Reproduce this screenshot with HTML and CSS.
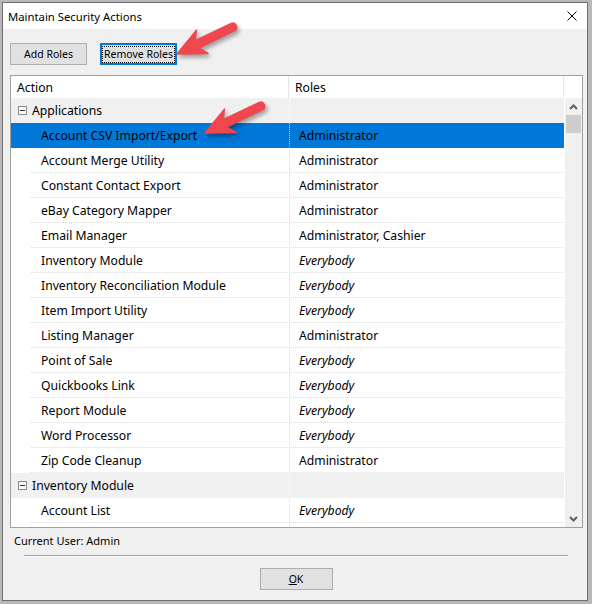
FILE: index.html
```html
<!DOCTYPE html>
<html lang="en">

<head>
    <meta charset="UTF-8">
    <title>Maintain Security Actions</title>
    <link rel="stylesheet" href="styles.css">
</head>

<body>
    <div class="window">
        <div class="titlebar">
            <span class="title">Maintain Security Actions</span>
            <svg class="close-icon" width="10" height="10" viewBox="0 0 10 10">
                <path d="M0.5 0.5 L9.5 9.5 M9.5 0.5 L0.5 9.5" stroke="#000" stroke-width="1" />
            </svg>
        </div>

        <div class="dialog">
            <div class="toolbar">
                <button type="button" class="btn">Add Roles</button>
                <button type="button" class="btn btn-focused"><span class="focus-rect">Remove Roles</span></button>
            </div>

            <div class="listview">
                <div class="lv-header">
                    <div class="hd-action">Action</div>
                    <div class="hd-roles">Roles</div>
                    <div class="hd-rest"></div>
                </div>
                <div class="lv-body">
                    <div class="lv-rows">
                        <div class="row group">
                            <div class="cell-action"><span class="toggle"></span>Applications</div>
                            <div class="cell-roles"></div>
                        </div>
                        <div class="row selected">
                            <div class="cell-action">Account CSV Import/Export</div>
                            <div class="cell-roles">Administrator</div>
                        </div>
                        <div class="row">
                            <div class="cell-action">Account Merge Utility</div>
                            <div class="cell-roles">Administrator</div>
                        </div>
                        <div class="row">
                            <div class="cell-action">Constant Contact Export</div>
                            <div class="cell-roles">Administrator</div>
                        </div>
                        <div class="row">
                            <div class="cell-action">eBay Category Mapper</div>
                            <div class="cell-roles">Administrator</div>
                        </div>
                        <div class="row">
                            <div class="cell-action">Email Manager</div>
                            <div class="cell-roles">Administrator, Cashier</div>
                        </div>
                        <div class="row">
                            <div class="cell-action">Inventory Module</div>
                            <div class="cell-roles everybody">Everybody</div>
                        </div>
                        <div class="row">
                            <div class="cell-action">Inventory Reconciliation Module</div>
                            <div class="cell-roles everybody">Everybody</div>
                        </div>
                        <div class="row">
                            <div class="cell-action">Item Import Utility</div>
                            <div class="cell-roles everybody">Everybody</div>
                        </div>
                        <div class="row">
                            <div class="cell-action">Listing Manager</div>
                            <div class="cell-roles">Administrator</div>
                        </div>
                        <div class="row">
                            <div class="cell-action">Point of Sale</div>
                            <div class="cell-roles everybody">Everybody</div>
                        </div>
                        <div class="row">
                            <div class="cell-action">Quickbooks Link</div>
                            <div class="cell-roles everybody">Everybody</div>
                        </div>
                        <div class="row">
                            <div class="cell-action">Report Module</div>
                            <div class="cell-roles everybody">Everybody</div>
                        </div>
                        <div class="row">
                            <div class="cell-action">Word Processor</div>
                            <div class="cell-roles everybody">Everybody</div>
                        </div>
                        <div class="row">
                            <div class="cell-action">Zip Code Cleanup</div>
                            <div class="cell-roles">Administrator</div>
                        </div>
                        <div class="row group">
                            <div class="cell-action"><span class="toggle"></span>Inventory Module</div>
                            <div class="cell-roles"></div>
                        </div>
                        <div class="row">
                            <div class="cell-action">Account List</div>
                            <div class="cell-roles everybody">Everybody</div>
                        </div>
                        <div class="row">
                            <div class="cell-action"></div>
                            <div class="cell-roles"></div>
                        </div>
                    </div>
                    <div class="scrollbar">
                        <div class="sb-button">
                            <svg width="9" height="6" viewBox="0 0 9 6"><path d="M1 5 L4.5 1.5 L8 5" fill="none" stroke="#606060" stroke-width="2" /></svg>
                        </div>
                        <div class="sb-thumb"></div>
                        <div class="sb-track"></div>
                        <div class="sb-button">
                            <svg width="9" height="6" viewBox="0 0 9 6"><path d="M1 1 L4.5 4.5 L8 1" fill="none" stroke="#606060" stroke-width="2" /></svg>
                        </div>
                    </div>
                </div>
            </div>

            <div class="status">Current User: Admin</div>
            <div class="separator"></div>

            <div class="footer">
                <button type="button" class="btn btn-ok"><u>O</u>K</button>
            </div>
        </div>
    </div>

    <!-- red callout arrows drawn over the dialog -->
    <svg class="callouts" width="592" height="604" viewBox="0 0 592 604">
        <path transform="translate(177 54)" d="M0 0 L19.5 -23.9 L18.1 -13.2 L54.3 -30.6 A4 4 0 0 1 57.7 -23.4 L21.5 -6 L30.9 -0.5 Z" />
        <path transform="translate(205 133)" d="M0 0 L19.5 -23.9 L18.1 -13.2 L54.3 -30.6 A4 4 0 0 1 57.7 -23.4 L21.5 -6 L30.9 -0.5 Z" />
    </svg>
</body>

</html>
```

FILE: styles.css
```css
:root {
    --face-color: #f0f0f0;
    --button-color: #e1e1e1;
    --button-border: #adadad;
    --select-color: #0078d7;
    --grid-line: #dcdcdc;
    --text-color: #000000;
    --arrow-color: #f0464e;
}

body {
    font-family: "Noto Sans", "Open Sans", sans-serif;
    font-size: 11.3px;
    margin: 0;
    width: 592px;
    height: 604px;
    background-color: #b8b8b8;
    color: var(--text-color);
    position: relative;
    overflow: hidden;
}

.window {
    margin: 2px 0 0 2px;
    width: 584px;
    height: 597px;
    border: 1px solid #6f6f6f;
    display: flex;
    flex-direction: column;
}

.titlebar {
    height: 26px;
    background: #ffffff;
    display: flex;
    align-items: center;
    justify-content: space-between;
    padding: 0 10px 0 5px;
}

.title {
    font-size: 11.3px;
}

.close-icon {
    display: block;
}

.dialog {
    flex-grow: 1;
    background: var(--face-color);
    display: flex;
    flex-direction: column;
}

.toolbar {
    display: flex;
    gap: 13px;
    padding: 14px 0 0 7px;
}

.btn {
    width: 77px;
    height: 22px;
    padding: 0;
    font-family: inherit;
    font-size: 10.5px;
    white-space: nowrap;
    color: var(--text-color);
    background: var(--button-color);
    border: 1px solid var(--button-border);
}

.btn-focused {
    border: 2px solid var(--select-color);
    display: flex;
    align-items: center;
    justify-content: center;
}

.focus-rect {
    border: 1px dotted #000;
    padding: 1px 1px;
    line-height: 13px;
}

.listview {
    margin: 10px 0 0 7px;
    width: 573px;
    height: 453px;
    box-sizing: border-box;
    border: 1px solid #a0a0a0;
    background: #ffffff;
    display: flex;
    flex-direction: column;
    overflow: hidden;
}

.lv-header {
    height: 22px;
    flex-shrink: 0;
    display: flex;
    font-size: 12.2px;
}

.lv-header > div {
    display: flex;
    align-items: center;
    padding-left: 6px;
    box-sizing: border-box;
}

.hd-action {
    width: 278px;
    border-right: 1px solid #e5e5e5;
}

.hd-roles {
    width: 275px;
    border-right: 1px solid #e5e5e5;
}

.hd-rest {
    flex-grow: 1;
}

.lv-body {
    flex-grow: 1;
    display: flex;
    min-height: 0;
}

.lv-rows {
    width: 553px;
    overflow: hidden;
}

.row {
    height: 25px;
    display: grid;
    grid-template-columns: 278px 1fr;
    font-size: 12.2px;
}

.cell-action,
.cell-roles {
    display: flex;
    align-items: center;
    white-space: nowrap;
    box-sizing: border-box;
}

.cell-action {
    padding-left: 30px;
    background-image: repeating-linear-gradient(90deg, var(--grid-line) 0 1px, transparent 1px 2px);
    background-repeat: no-repeat;
    background-size: calc(100% - 20px) 1px;
    background-position: 20px 100%;
}

.cell-roles {
    padding-left: 9px;
    border-left: 1px dotted var(--grid-line);
    border-bottom: 1px dotted var(--grid-line);
}

.everybody {
    font-style: italic;
}

.row.group {
    background: var(--face-color);
}

.row.group .cell-action {
    padding-left: 7px;
    background-image: none;
}

.row.group .cell-roles {
    border-left-color: #ffffff;
    border-bottom-color: transparent;
}

.row.selected {
    background: var(--select-color);
}

.row.selected .cell-action {
    background-image: none;
}

.row.selected .cell-roles {
    border-left-color: rgba(255, 255, 255, 0.7);
    border-bottom-color: transparent;
}

.toggle {
    width: 9px;
    height: 9px;
    box-sizing: border-box;
    border: 1px solid #8a8a8a;
    background: #fafafa;
    margin-right: 5px;
    display: flex;
    align-items: center;
    justify-content: center;
}

.toggle::before {
    content: "";
    width: 5px;
    height: 1px;
    background: #333333;
}

.scrollbar {
    width: 17px;
    flex-shrink: 0;
    margin-left: 1px;
    background: var(--face-color);
    display: flex;
    flex-direction: column;
}

.sb-button {
    height: 17px;
    display: flex;
    align-items: center;
    justify-content: center;
}

.sb-button svg {
    display: block;
}

.sb-thumb {
    height: 18px;
    margin: 0 1px;
    background: #cdcdcd;
}

.sb-track {
    flex-grow: 1;
}

.status {
    padding: 5px 0 0 11px;
    height: 16px;
    line-height: 16px;
    font-size: 11px;
}

.separator {
    margin: 6px 0 0 21px;
    width: 544px;
    height: 1px;
    background: #a0a0a0;
    border-bottom: 1px solid #ffffff;
}

.footer {
    display: flex;
    justify-content: center;
    padding-top: 11px;
}

.btn-ok {
    width: 73px;
    margin-left: 2px;
}

.callouts {
    position: absolute;
    left: 0;
    top: 0;
    pointer-events: none;
    fill: var(--arrow-color);
    stroke: var(--arrow-color);
    stroke-width: 1.5;
    stroke-linejoin: round;
    filter: drop-shadow(2px 3px 2px rgba(0, 0, 0, 0.35));
}
```
